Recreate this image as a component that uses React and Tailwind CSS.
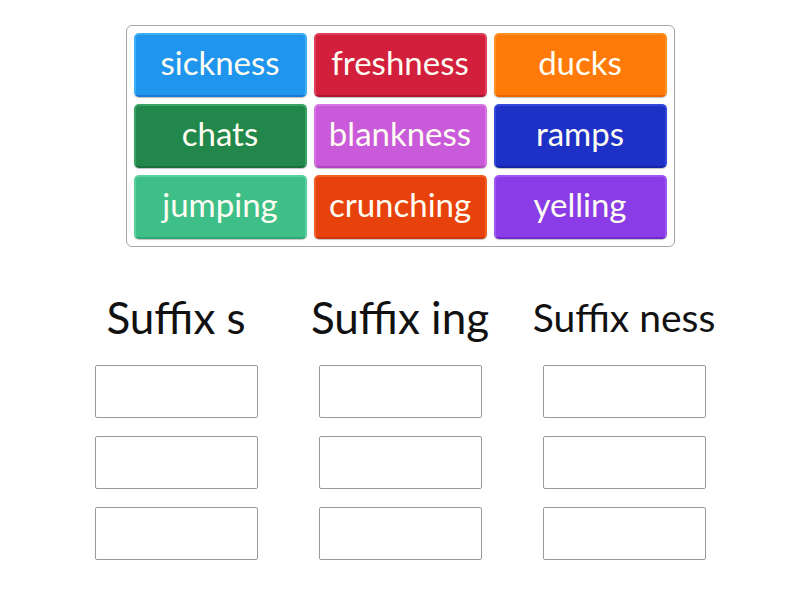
const tiles = [
  { word: "sickness", cls: "bg-[#1f95ee] border-[#3db0f9] border-b-[#1679d4]" },
  { word: "freshness", cls: "bg-[#d21f3c] border-[#e0405a] border-b-[#b0142e]" },
  { word: "ducks", cls: "bg-[#ff7a08] border-[#ff9124] border-b-[#ec6500]" },
  { word: "chats", cls: "bg-[#22874a] border-[#39a463] border-b-[#17703b]" },
  { word: "blankness", cls: "bg-[#c95ad9] border-[#d874e6] border-b-[#b046c0]" },
  { word: "ramps", cls: "bg-[#1d31c6] border-[#3548dc] border-b-[#1424a8]" },
  { word: "jumping", cls: "bg-[#3fbf88] border-[#5bd29d] border-b-[#2fa874]" },
  { word: "crunching", cls: "bg-[#e8420c] border-[#f35f25] border-b-[#cc3404]" },
  { word: "yelling", cls: "bg-[#8a3de7] border-[#9d57f3] border-b-[#7129cf]" },
];

const groups = [
  { title: "Suffix s", size: "text-[44px]" },
  { title: "Suffix ing", size: "text-[44px]" },
  { title: "Suffix ness", size: "text-[39px]" },
];

/* -------------------- TILE -------------------- */
const Tile = ({ word, cls }) => (
  <div
    className={`h-[64px] rounded-[5px] border-2 ${cls} flex items-center justify-center shadow-[0_1px_1px_rgba(0,0,0,0.25)]`}
  >
    <span className="text-[33px] leading-none text-[#fffdf3] pb-[5px]">{word}</span>
  </div>
);

export default function App() {
  return (
    <div className="w-[800px] h-[600px] bg-white font-['Lato','Open_Sans',sans-serif] overflow-hidden">
      {/* Word bank */}
      <div className="pt-[25px] flex justify-center">
        <div className="w-[549px] border border-[#a6a6a6] rounded-[6px] p-[7px] grid grid-cols-3 gap-[7px] bg-white">
          {tiles.map((t) => (
            <Tile key={t.word} word={t.word} cls={t.cls} />
          ))}
        </div>
      </div>

      {/* Groups */}
      <div className="mt-[44px] ml-[64px] w-[672px] grid grid-cols-3">
        {groups.map((g) => (
          <div key={g.title} className="flex flex-col items-center">
            <div className={`h-[52px] flex items-center ${g.size} leading-none text-[#111]`}>
              {g.title}
            </div>
            <div className="mt-[22px] flex flex-col gap-[18px]">
              {[0, 1, 2].map((i) => (
                <div
                  key={i}
                  className="w-[163px] h-[53px] border border-[#9a9a9a] rounded-[2px] bg-white"
                />
              ))}
            </div>
          </div>
        ))}
      </div>
    </div>
  );
}
